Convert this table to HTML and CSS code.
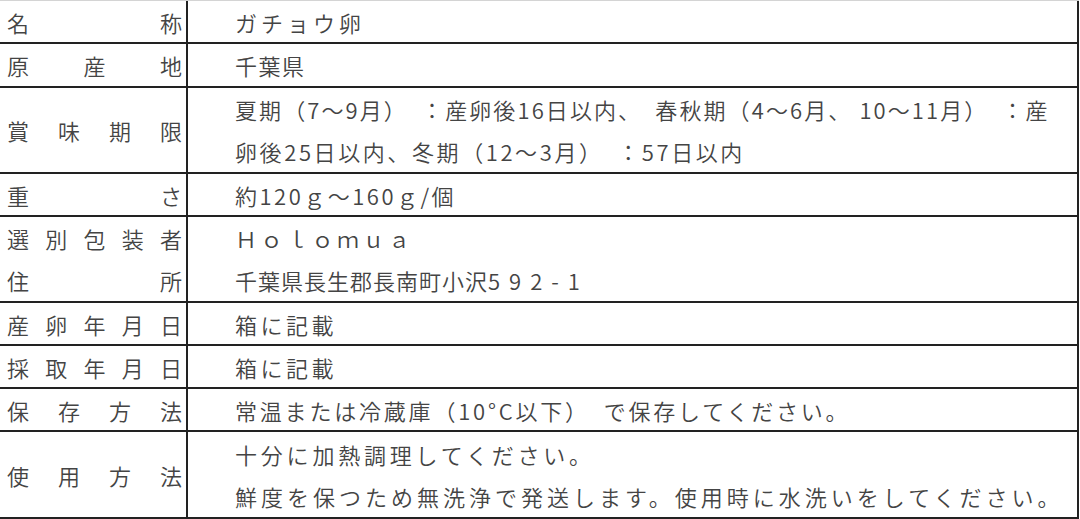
FILE: index.html
```html
<!DOCTYPE html>
<html lang="ja">
<head>
<meta charset="utf-8">
<title>商品情報</title>
<link rel="stylesheet" href="styles.css">
</head>
<body>
<div class="spec">
  <div class="label r1"><div class="dist"><span>名</span><span>称</span></div></div>
  <div class="value r1"><div class="line ls4">ガチョウ卵</div></div>

  <div class="label r2"><div class="dist"><span>原</span><span>産</span><span>地</span></div></div>
  <div class="value r2"><div class="line ls15">千葉県</div></div>

  <div class="label r3"><div class="dist"><span>賞</span><span>味</span><span>期</span><span>限</span></div></div>
  <div class="value r3">
    <div class="line ls21">夏期（7〜9月）　：産卵後16日以内、　春秋期（4〜6月、 10〜11月）　：産</div>
    <div class="line ls26">卵後25日以内、冬期（12〜3月）　：57日以内</div>
  </div>

  <div class="label r4"><div class="dist"><span>重</span><span>さ</span></div></div>
  <div class="value r4"><div class="line ls25">約120ｇ〜160ｇ/個</div></div>

  <div class="label r5">
    <div class="dist"><span>選</span><span>別</span><span>包</span><span>装</span><span>者</span></div>
    <div class="dist"><span>住</span><span>所</span></div>
  </div>
  <div class="value r5">
    <div class="line ls35">Ｈｏｌｏｍｕａ</div>
    <div class="line ls1">千葉県長生郡長南町小沢<span class="wide">592-1</span></div>
  </div>

  <div class="label r6"><div class="dist"><span>産</span><span>卵</span><span>年</span><span>月</span><span>日</span></div></div>
  <div class="value r6"><div class="line ls35">箱に記載</div></div>

  <div class="label r7"><div class="dist"><span>採</span><span>取</span><span>年</span><span>月</span><span>日</span></div></div>
  <div class="value r7"><div class="line ls35">箱に記載</div></div>

  <div class="label r8"><div class="dist"><span>保</span><span>存</span><span>方</span><span>法</span></div></div>
  <div class="value r8"><div class="line ls28">常温または冷蔵庫（10°C以下）　で保存してください。</div></div>

  <div class="label r9"><div class="dist"><span>使</span><span>用</span><span>方</span><span>法</span></div></div>
  <div class="value r9">
    <div class="line ls38">十分に加熱調理してください。</div>
    <div class="line ls4">鮮度を保つため無洗浄で発送します。使用時に水洗いをしてください。</div>
  </div>
</div>
</body>
</html>
```
FILE: styles.css
```css
html, body {
  margin: 0;
  padding: 0;
  background: #ffffff;
}

body {
  font-family: "Noto Sans CJK JP", "Noto Sans", sans-serif;
  font-size: 22px;
  font-weight: 350;
  color: #444444;
}

.spec {
  width: 1079px;
  display: grid;
  grid-template-columns: 188px 891px;
  grid-template-rows: 43px 44px 86px 43px 86px 43px 43px 43px 87px;
  border-top: 1px solid #d4d4d4;
}

.label,
.value {
  display: flex;
  flex-direction: column;
  justify-content: center;
  border-bottom: 2px solid #222222;
}

.label {
  border-right: 2px solid #222222;
  padding: 0 4px 0 7px;
}

.value {
  border-right: 2px solid #222222;
  padding-left: 47px;
}

.dist {
  display: flex;
  justify-content: space-between;
  line-height: 42px;
}

.line {
  white-space: nowrap;
  line-height: 42px;
}

.ls1 { letter-spacing: 1px; }
.ls15 { letter-spacing: 1.5px; }
.ls21 { letter-spacing: 2.1px; }
.ls25 { letter-spacing: 2.5px; }
.ls26 { letter-spacing: 2.6px; }
.ls28 { letter-spacing: 2.8px; }
.ls35 { letter-spacing: 3.5px; }
.ls38 { letter-spacing: 3.8px; }
.ls4 { letter-spacing: 4px; }

.wide { letter-spacing: 9px; }
```
